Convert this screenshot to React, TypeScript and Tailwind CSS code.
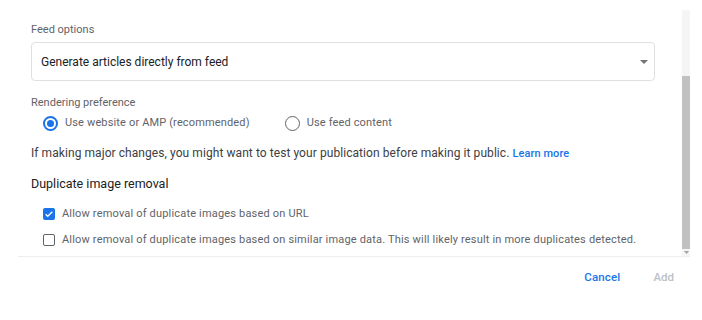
// Feed settings dialog body (options + footer)
const font = { fontFamily: 'Roboto, "Noto Sans", sans-serif' };

function Radio({ checked, label }: { checked: boolean; label: string }) {
  return (
    <label className="flex items-center gap-[7px]">
      <span
        className={
          checked
            ? 'flex h-[15px] w-[15px] items-center justify-center rounded-full border-2 border-[#1a73e8]'
            : 'flex h-[15px] w-[15px] items-center justify-center rounded-full border-[1.5px] border-[#5f6368]'
        }
      >
        {checked && <span className="h-[7px] w-[7px] rounded-full bg-[#1a73e8]" />}
      </span>
      <span className="text-[11px] tracking-[0.15px] text-[#5f6368]">{label}</span>
    </label>
  );
}

function Checkbox({ checked, label }: { checked: boolean; label: string }) {
  return (
    <label className="flex h-[18px] items-center gap-[7px]">
      {checked ? (
        <span className="flex h-[12px] w-[12px] items-center justify-center rounded-[2px] bg-[#1a73e8]">
          <svg width="10" height="10" viewBox="0 0 24 24">
            <path d="M4 12.5l5 5L20 6.5" fill="none" stroke="#fff" strokeWidth="3" />
          </svg>
        </span>
      ) : (
        <span className="h-[12px] w-[12px] rounded-[2px] border-[1.5px] border-[#5f6368]" />
      )}
      <span className="text-[11px] tracking-[0.18px] text-[#5f6368]">{label}</span>
    </label>
  );
}

export default function App() {
  return (
    <div className="h-[320px] w-[702px] bg-white" style={font}>
      <div className="ml-[18px] mr-[12px] mt-[10px] flex h-[247px] border-b border-[#eeeeee]">
        {/* scrolling content */}
        <div className="flex-1 pl-[13px] pr-[27px]">
          <div className="mt-[13px] h-[14px] text-[11px] leading-[14px] text-[#5f6368]">Feed options</div>
          <div className="mt-[5px] flex h-[39px] items-center justify-between rounded-[4px] border border-[#e0e0e0] pl-[9px] pr-[6px]">
            <span className="text-[12px] text-[#202124]">Generate articles directly from feed</span>
            <svg width="8" height="4" viewBox="0 0 8 4">
              <path d="M0 0h8L4 4z" fill="#757575" />
            </svg>
          </div>

          <div className="mt-[15px] h-[14px] text-[11px] leading-[14px] text-[#5f6368]">Rendering preference</div>
          <div className="mt-[3px] flex h-[20px] items-center gap-[35px] pl-[12px]">
            <Radio checked label="Use website or AMP (recommended)" />
            <Radio checked={false} label="Use feed content" />
          </div>

          <p className="mt-[11px] h-[18px] text-[12px] leading-[18px] tracking-[0.07px] text-[#3c4043]">
            If making major changes, you might want to test your publication before making it public.{' '}
            <a className="text-[11px] font-medium text-[#1a73e8]">Learn more</a>
          </p>

          <div className="mt-[13px] h-[18px] text-[12.5px] leading-[18px] text-[#202124]">Duplicate image removal</div>
          <div className="mt-[12px] pl-[12px]">
            <Checkbox checked label="Allow removal of duplicate images based on URL" />
          </div>
          <div className="mt-[8px] pl-[12px]">
            <Checkbox
              checked={false}
              label="Allow removal of duplicate images based on similar image data. This will likely result in more duplicates detected."
            />
          </div>
        </div>

        {/* scrollbar */}
        <div className="flex w-[8px] flex-col bg-[#f5f5f5]">
          <div className="h-[66px]" />
          <div className="flex-1 bg-[#c1c1c1]" />
          <div className="flex h-[7px] items-center justify-center">
            <svg width="5" height="3" viewBox="0 0 5 3">
              <path d="M0 0h5L2.5 3z" fill="#a3a3a3" />
            </svg>
          </div>
        </div>
      </div>

      <div className="mt-[12px] flex items-center justify-end gap-[33px] pr-[28px]">
        <button className="text-[11.5px] font-medium tracking-[0.15px] text-[#1a73e8]">Cancel</button>
        <button className="text-[11.5px] font-medium text-[#bdc1c6]">Add</button>
      </div>
    </div>
  );
}
